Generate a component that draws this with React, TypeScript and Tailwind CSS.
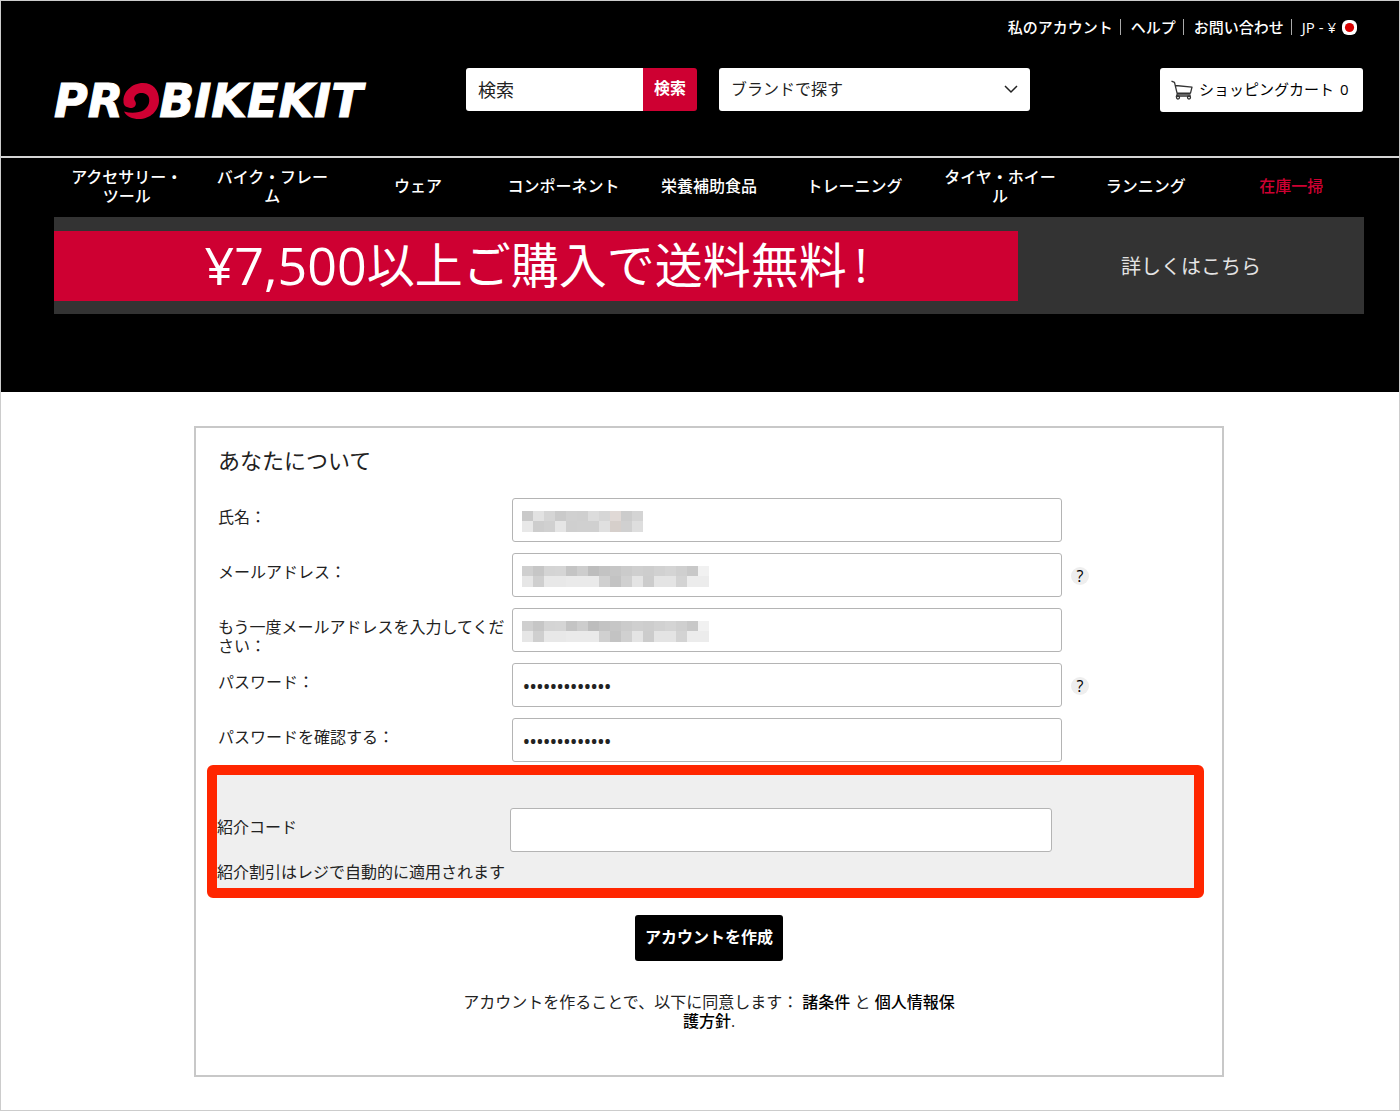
import { useState, type ReactNode } from "react";

const accountLinks = ["私のアカウント", "ヘルプ", "お問い合わせ"];

const categories = [
  "アクセサリー・ツール",
  "バイク・フレーム",
  "ウェア",
  "コンポーネント",
  "栄養補助食品",
  "トレーニング",
  "タイヤ・ホイール",
  "ランニング",
];

// Two rows of greys per masked value, one entry per 11px block.
const nameMask = [
  ["#c9c9c9", "#e2e2e2", "#d5d5d5", "#cacaca", "#d0d0d0", "#cfcfcf", "#dcdcdc", "#d6d6d6", "#e0d9d6", "#cccccc", "#d4d4d4"],
  ["#e8e8e8", "#cdcdcd", "#d0d0d0", "#e5e5e5", "#cfcfcf", "#d0d0d0", "#d0d0d0", "#e0e0e0", "#d6cfcb", "#d0d0d0", "#dedede"],
];
const emailMask = [
  ["#cfcfcf", "#c6c6c6", "#d4d4d4", "#d5d5d5", "#c4c4c4", "#cdcdcd", "#bdbdbd", "#c3c3c3", "#c6c6c6", "#cbcbcb", "#cfcfcf", "#cdcdcd", "#d1d1d1", "#d4d4d4", "#cfcfcf", "#c8c8c8", "#f1f1f1"],
  ["#e6e6e6", "#cfcfcf", "#e8e8e8", "#e8e8e8", "#eaeaea", "#eaeaea", "#eaeaea", "#d0d0d0", "#c3c3c3", "#d0d0d0", "#e4e4e4", "#cccccc", "#e4e4e4", "#e4e4e4", "#d3d3d3", "#ececec", "#ececec"],
];

export default function App() {
  return (
    <div className="border border-[#cccccc] bg-white font-['Open_Sans','Noto_Sans_CJK_JP',sans-serif] text-base text-[#222222]">
      <Header />
      <main className="pt-[34px] pr-[35px] pb-[33px] pl-[53px]">
        <SignUpForm />
      </main>
    </div>
  );
}

function Header() {
  return (
    <header className="bg-black pb-[78px] text-white">
      <div className="pr-[35px] pl-[53px]">
        <ul className="flex h-[67px] items-start justify-end pt-4 pr-[7px] text-[15px] leading-5 font-medium">
          {accountLinks.map((label) => (
            <li key={label} className="flex items-center">
              <a href="#">{label}</a>
              <span className="mr-[10px] ml-[7px] h-4 w-px bg-[#aaaaaa]" />
            </li>
          ))}
          <li>
            <a href="#" className="flex items-center gap-[6px]">
              JP - ¥
              <svg width="15" height="15" viewBox="0 0 15 15" aria-hidden="true">
                <rect width="15" height="15" rx="6" fill="#ffffff" />
                <circle cx="7.5" cy="7.5" r="4.6" fill="#d80000" />
              </svg>
            </a>
          </li>
        </ul>

        <div className="flex h-[88px] items-start">
          <a href="#" aria-label="ProBikeKit" className="mt-3 w-[412px] shrink-0">
            <Logo />
          </a>
          <form className="flex h-[43px] w-[231px]" onSubmit={(e) => e.preventDefault()}>
            <input
              type="text"
              aria-label="検索"
              placeholder="検索"
              className="w-full min-w-0 rounded-l-[3px] bg-white px-3 text-lg text-[#222222] placeholder:text-[#222222]"
            />
            <button type="submit" className="w-[54px] shrink-0 rounded-r-[3px] bg-[#ce0032] pb-1 font-semibold">
              検索
            </button>
          </form>
          <div className="relative ml-[22px] w-[311px]">
            <select
              aria-label="ブランドで探す"
              className="h-[43px] w-full appearance-none rounded-[3px] bg-white px-3 pb-[2px] text-[#222222]"
            >
              <option>ブランドで探す</option>
            </select>
            <svg
              className="pointer-events-none absolute top-[17px] right-3"
              width="14"
              height="9"
              viewBox="0 0 14 9"
              fill="none"
              stroke="#222222"
              strokeWidth="1.5"
              aria-hidden="true"
            >
              <path d="M1 1l6 6 6-6" />
            </svg>
          </div>
          <a
            href="#"
            className="mr-px ml-auto flex h-11 w-[203px] items-center gap-[6px] rounded-[3px] bg-white pl-[11px] text-black"
          >
            <CartIcon />
            <span className="flex gap-[6px] pb-[2px] text-[15px] whitespace-nowrap">
              ショッピングカート <span>0</span>
            </span>
          </a>
        </div>
      </div>

      <nav className="border-t-2 border-[#d4d4d4] pr-[35px] pl-[53px]">
        <ul className="grid h-[57px] grid-cols-9 items-center text-center leading-[19px] font-medium">
          {categories.map((name) => (
            <li key={name} className="px-4">
              <a href="#">{name}</a>
            </li>
          ))}
          <li>
            <a href="#" className="text-[#ce0032]">
              在庫一掃
            </a>
          </li>
        </ul>
      </nav>

      <div className="mt-[2px] pr-[35px] pl-[53px]">
        <div className="flex h-[97px] items-center bg-[#333333]">
          <p className="flex h-[70px] flex-1 items-center justify-center bg-[#ce0032] pb-[2px] text-5xl whitespace-nowrap">
            <span className="text-[52px]">¥7,500</span>以上ご購入で送料無料
            <span className="ml-2">!</span>
          </p>
          <a href="#" className="w-[346px] pt-[3px] text-center text-xl text-[#e4e4e4]">
            詳しくはこちら
          </a>
        </div>
      </div>
    </header>
  );
}

function Logo() {
  return (
    <span className="flex items-center font-['DejaVu_Sans'] text-[46px] leading-[42px] font-bold text-white italic [-webkit-text-stroke:1px_white]">
      PR
      <svg width="36" height="36" viewBox="0 0 36 36" aria-hidden="true">
        <path
          fill="#ce0032"
          d="M0.500 18C0 9 9 0 20 0C30 0 36 7 36 17C36 28 27 36 16 36C9 36 4 34 1 28.500C8 30.500 16 30 21 27C25 24 27 20 26 15C25 11 21 9.500 17 10C12 11 10 15 12 18C14 21 12.500 24 9 25C4 25 0 23 0.500 18Z"
        />
      </svg>
      BIKEKIT
    </span>
  );
}

function CartIcon() {
  return (
    <svg width="22" height="20" viewBox="0 0 22 20" fill="none" stroke="#333333" strokeWidth="1.3" aria-hidden="true">
      <path d="M0.500 1.200l3 1.200 2.800 11.800h13.200M4.500 5.500l16.500 1.600-1.500 6H6" strokeLinejoin="round" />
      <path d="M6.300 14.200l-.8 1.800h14.300" />
      <circle cx="7" cy="17.500" r="1.500" />
      <circle cx="18" cy="17.500" r="1.500" />
    </svg>
  );
}

function SignUpForm() {
  const [password, setPassword] = useState("passw0rd12345");
  const [confirm, setConfirm] = useState("passw0rd12345");

  return (
    <form
      className="mx-auto w-full max-w-[1030px] border-2 border-[#c8c8c8] px-[11px] pt-[18px] pb-11"
      onSubmit={(e) => e.preventDefault()}
    >
      <h2 className="mb-6 px-[11px] text-[22px] leading-7">あなたについて</h2>

      <div className="flex flex-col gap-[11px] px-[11px]">
        <Field id="name" label="氏名：">
          <input id="name" type="text" className="h-11 w-full rounded-[3px] border border-[#b4b4b4] px-[11px]" />
          <Mask rows={nameMask} />
        </Field>
        <Field id="email" label="メールアドレス：" help>
          <input id="email" type="email" className="h-11 w-full rounded-[3px] border border-[#b4b4b4] px-[11px]" />
          <Mask rows={emailMask} />
        </Field>
        <Field id="email-confirm" label="もう一度メールアドレスを入力してください：">
          <input id="email-confirm" type="email" className="h-11 w-full rounded-[3px] border border-[#b4b4b4] px-[11px]" />
          <Mask rows={emailMask} />
        </Field>
        <Field id="password" label="パスワード：" help>
          <input
            id="password"
            type="password"
            value={password}
            onChange={(e) => setPassword(e.target.value)}
            className="h-11 w-full rounded-[3px] border border-[#b4b4b4] px-[10px] pt-[2px] text-lg font-semibold"
          />
        </Field>
        <Field id="password-confirm" label="パスワードを確認する：">
          <input
            id="password-confirm"
            type="password"
            value={confirm}
            onChange={(e) => setConfirm(e.target.value)}
            className="h-11 w-full rounded-[3px] border border-[#b4b4b4] px-[10px] pt-[2px] text-lg font-semibold"
          />
        </Field>
      </div>

      <div className="mt-[3px] mr-[7px] rounded-md border-10 border-[#ff2600] bg-[#ff2600]">
        <div className="bg-[#efefef] pt-[33px] pb-[6px]">
          <div className="flex">
            <label htmlFor="referral" className="w-[293px] shrink-0 pt-[10px] leading-[19px]">
              紹介コード
            </label>
            <input
              id="referral"
              type="text"
              className="h-11 w-[542px] min-w-0 rounded-[3px] border border-[#b4b4b4] bg-white px-[11px]"
            />
          </div>
          <p className="mt-[11px] leading-[19px]">紹介割引はレジで自動的に適用されます</p>
        </div>
      </div>

      <div className="mt-[17px] flex justify-center">
        <button type="submit" className="h-[46px] rounded-[3px] bg-black px-[10px] pb-[2px] font-semibold text-white">
          アカウントを作成
        </button>
      </div>

      <p className="mx-auto mt-8 max-w-[496px] text-center leading-[19px]">
        アカウントを作ることで、以下に同意します：{" "}
        <a href="#" className="font-medium text-black">
          諸条件
        </a>{" "}
        と{" "}
        <a href="#" className="font-medium text-black">
          個人情報保護方針
        </a>
        .
      </p>
    </form>
  );
}

type FieldProps = { id: string; label: string; help?: boolean; children: ReactNode };

function Field({ id, label, help, children }: FieldProps) {
  return (
    <div className="flex h-11">
      <label htmlFor={id} className="w-[294px] shrink-0 pt-[10px] leading-[19px]">
        {label}
      </label>
      <div className="relative w-[550px]">{children}</div>
      {help && (
        <button
          type="button"
          aria-label="ヘルプ"
          className="mt-[14px] ml-[9px] h-[18px] w-[18px] rounded-full bg-[#eeeeee] leading-[18px] font-medium text-black"
        >
          ?
        </button>
      )}
    </div>
  );
}

function Mask({ rows }: { rows: string[][] }) {
  return (
    <svg
      className="pointer-events-none absolute top-[13px] left-[10px]"
      width={rows[0].length * 11}
      height="21"
      shapeRendering="crispEdges"
      aria-hidden="true"
    >
      {rows.map((row, y) =>
        row.map((fill, x) => (
          <rect key={`${x}-${y}`} x={x * 11} y={y * 10} width="11" height={y ? 11 : 10} fill={fill} />
        )),
      )}
    </svg>
  );
}
